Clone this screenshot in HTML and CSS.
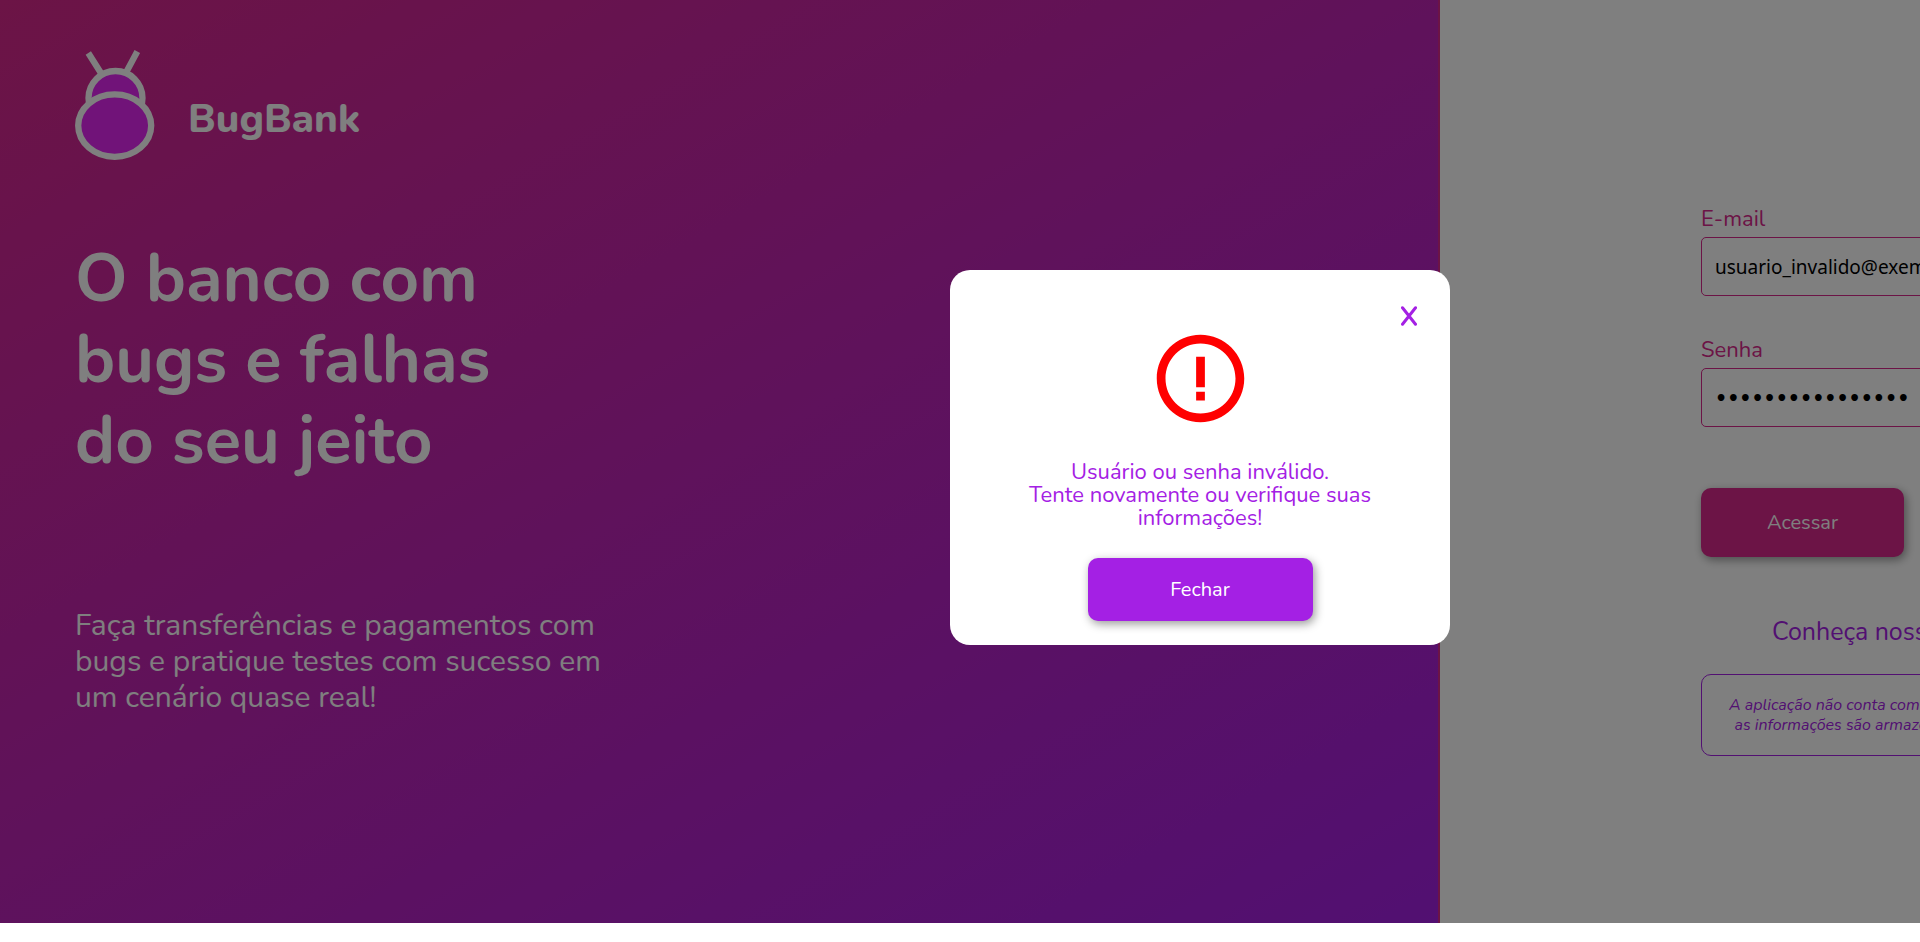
FILE: index.html
```html
<!DOCTYPE html>
<html lang="pt-BR">
<head>
<meta charset="utf-8">
<meta name="viewport" content="width=device-width, initial-scale=1">
<title>BugBank</title>
<link rel="stylesheet" href="styles.css">
</head>
<body>
<div class="page">
  <main class="layout">
    <section class="hero">
      <div class="brand">
        <svg class="brand-logo" viewBox="0 0 80 110" aria-hidden="true">
          <g fill="#e326f2" stroke="#fff" stroke-width="6.300">
            <path d="M13.300 3 L27.500 25.500 M62.300 1.500 L50 24.500" fill="none"/>
            <circle cx="40.500" cy="48" r="27"/>
            <ellipse cx="39.700" cy="75.600" rx="36.500" ry="31.200"/>
          </g>
        </svg>
        <span class="brand-name">BugBank</span>
      </div>
      <h1 class="hero-title">O banco com<br>bugs e falhas<br>do seu jeito</h1>
      <p class="hero-text">Faça transferências e pagamentos com<br>bugs e pratique testes com sucesso em<br>um cenário quase real!</p>
    </section>
    <section class="login">
      <form class="login-form">
        <label class="field-label" for="email">E-mail</label>
        <input class="field-input" id="email" type="email" value="usuario_invalido@exemplo.com">
        <label class="field-label" for="password">Senha</label>
        <input class="field-input field-password" id="password" type="password" value="senha_incorreta1">
        <div class="actions">
          <button class="button button-pink" type="submit">Acessar</button>
        </div>
        <a class="requirements" href="#">Conheça nossos requisitos</a>
        <p class="notice">A aplicação não conta com um banco de dados, todas<br>as informações são armazenadas em memória local.</p>
      </form>
    </section>
  </main>
  <div class="overlay">
    <div class="modal" role="dialog" aria-modal="true" aria-labelledby="modal-text">
      <button class="modal-x" type="button" aria-label="Fechar janela">
        <svg class="x-icon" viewBox="0 0 16 20" aria-hidden="true"><path d="M1.500 1.800 L14.500 18.200 M14.500 1.800 L1.500 18.200" stroke="currentColor" stroke-width="3" stroke-linecap="round"/></svg>
      </button>
      <svg class="alert-icon" viewBox="0 0 24 24" aria-hidden="true"><path fill="#f00" d="M11 15h2v2h-2v-2zm0-8h2v7h-2V7zm.99-5C6.470 2 2 6.480 2 12s4.470 10 9.990 10C17.520 22 22 17.520 22 12S17.520 2 11.990 2zM12 20c-4.420 0-8-3.580-8-8s3.580-8 8-8 8 3.580 8 8-3.580 8-8 8z"/></svg>
      <p class="modal-text" id="modal-text">Usuário ou senha inválido.<br>Tente novamente ou verifique suas<br>informações!</p>
      <button class="button button-purple" type="button">Fechar</button>
    </div>
  </div>
</div>
</body>
</html>
```
FILE: styles.css
```css
* {
  box-sizing: border-box;
  margin: 0;
}

html,
body {
  height: 100%;
}

body {
  overflow: hidden;
  background: #fff;
  font-family: Nunito, "Noto Sans", sans-serif;
}

.page {
  position: relative;
  width: 125%;
  height: 98%;
}

.layout {
  display: grid;
  grid-template-columns: 3fr 2fr;
  height: 100%;
}

.hero {
  padding: 50px 75px;
  border-right: 2px solid #d8288c;
  background: linear-gradient(150deg, #d8288c, #a420e4);
  color: #fff;
}

.brand {
  display: flex;
  align-items: center;
  gap: 33px;
}

.brand-logo {
  width: 80px;
  height: 110px;
}

.brand-name {
  padding-top: 28px;
  font-size: 40px;
  font-weight: 800;
  line-height: 48px;
}

.hero-title {
  padding-top: 79px;
  font-size: 67px;
  font-weight: 700;
  line-height: 81px;
}

.hero-text {
  padding-top: 126px;
  font-size: 30px;
  line-height: 36px;
}

.login {
  display: flex;
  flex-direction: column;
  align-items: center;
  padding-top: 205px;
}

.login-form {
  display: flex;
  flex-direction: column;
  width: 438px;
}

.field-label {
  color: #d8288c;
  font-size: 22px;
  line-height: 28px;
}

.field-input {
  height: 59px;
  margin: 4px 0 40px;
  padding: 0 13px;
  border: 1px solid #d8288c;
  border-radius: 5px;
  background: #fff;
  color: #000;
  font-family: "Noto Sans", sans-serif;
  font-size: 19px;
}

.field-password {
  font-family: "DejaVu Sans", sans-serif;
  font-weight: 700;
}

.actions {
  display: flex;
  padding-top: 21px;
}

.button {
  border: 0;
  border-radius: 10px;
  box-shadow: 2px 3px 10px rgba(0, 0, 0, 0.4);
  color: #fff;
  font-family: inherit;
  font-size: 20px;
}

.button-pink {
  width: 203px;
  height: 69px;
  background: #d8288c;
}

.requirements {
  padding: 58px 0 25px;
  color: #a420e4;
  font-size: 25px;
  line-height: 34px;
  text-align: center;
  text-decoration: none;
}

.notice {
  padding: 20px 12px;
  border: 1px solid #a420e4;
  border-radius: 10px;
  color: #a420e4;
  font-size: 16px;
  font-style: italic;
  line-height: 20px;
  text-align: center;
  white-space: nowrap;
}

.overlay {
  position: absolute;
  inset: 0;
  display: flex;
  align-items: center;
  justify-content: center;
  padding-bottom: 8px;
  background: rgba(0, 0, 0, 0.5);
}

.modal {
  display: flex;
  flex-direction: column;
  align-items: center;
  width: 500px;
  padding: 36px 33px 24px;
  border-radius: 20px;
  background: #fff;
  color: #a420e4;
}

.modal-x {
  display: flex;
  align-self: flex-end;
  padding: 0;
  border: 0;
  background: none;
  color: inherit;
}

.x-icon {
  width: 16px;
  height: 20px;
}

.alert-icon {
  width: 105px;
  height: 105px;
}

.modal-text {
  padding: 30px 0 28px;
  font-size: 22px;
  line-height: 23px;
  text-align: center;
}

.button-purple {
  width: 225px;
  height: 63px;
  background: #a420e4;
}
```
